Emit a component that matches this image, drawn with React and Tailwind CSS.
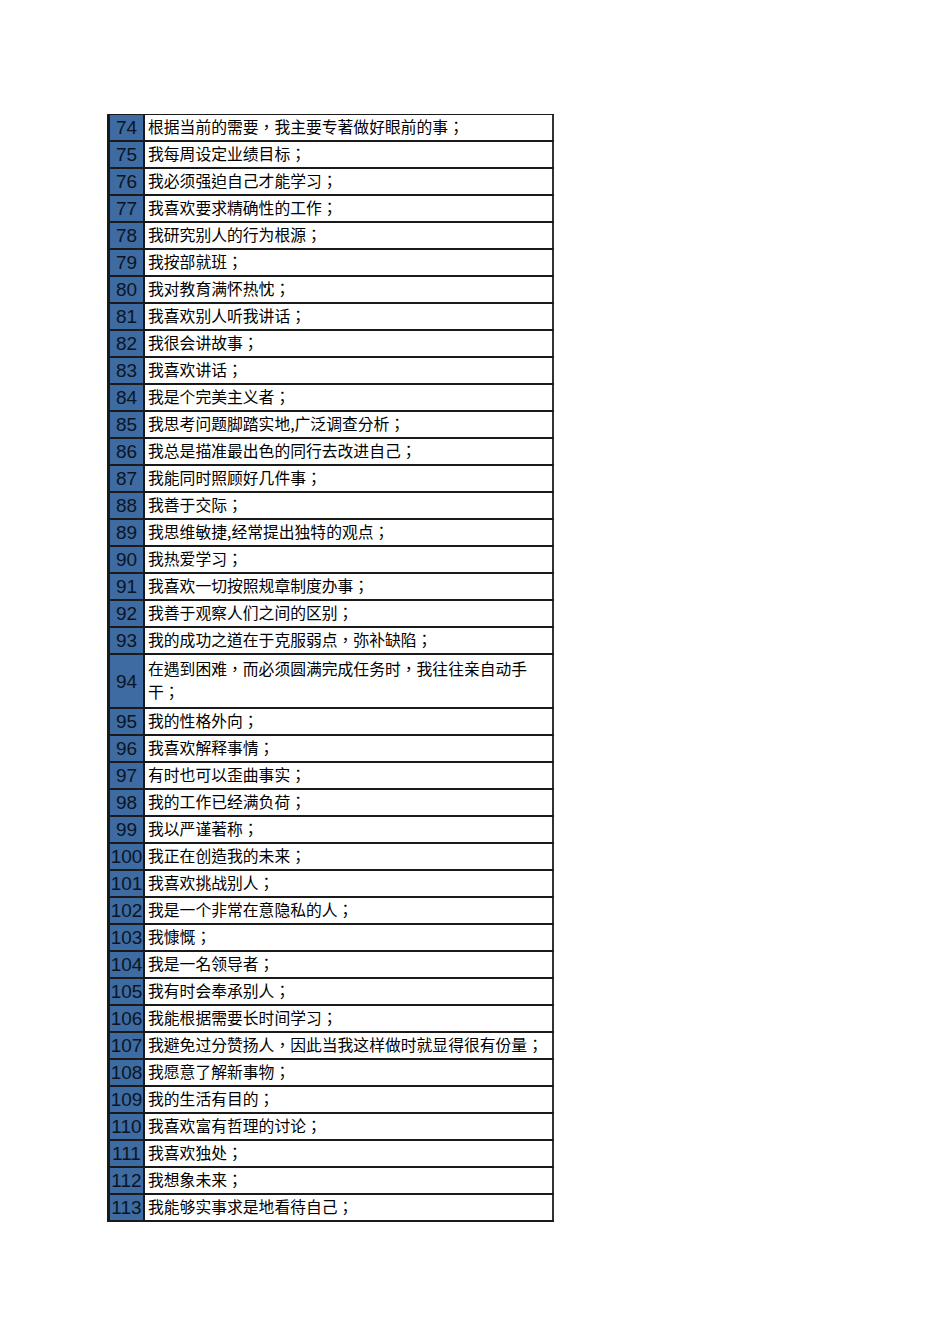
const ROWS = [
  [74, '根据当前的需要，我主要专著做好眼前的事；'],
  [75, '我每周设定业绩目标；'],
  [76, '我必须强迫自己才能学习；'],
  [77, '我喜欢要求精确性的工作；'],
  [78, '我研究别人的行为根源；'],
  [79, '我按部就班；'],
  [80, '我对教育满怀热忱；'],
  [81, '我喜欢别人听我讲话；'],
  [82, '我很会讲故事；'],
  [83, '我喜欢讲话；'],
  [84, '我是个完美主义者；'],
  [85, '我思考问题脚踏实地,广泛调查分析；'],
  [86, '我总是描准最出色的同行去改进自己；'],
  [87, '我能同时照顾好几件事；'],
  [88, '我善于交际；'],
  [89, '我思维敏捷,经常提出独特的观点；'],
  [90, '我热爱学习；'],
  [91, '我喜欢一切按照规章制度办事；'],
  [92, '我善于观察人们之间的区别；'],
  [93, '我的成功之道在于克服弱点，弥补缺陷；'],
  [94, '在遇到困难，而必须圆满完成任务时，我往往亲自动手', '干；'],
  [95, '我的性格外向；'],
  [96, '我喜欢解释事情；'],
  [97, '有时也可以歪曲事实；'],
  [98, '我的工作已经满负荷；'],
  [99, '我以严谨著称；'],
  [100, '我正在创造我的未来；'],
  [101, '我喜欢挑战别人；'],
  [102, '我是一个非常在意隐私的人；'],
  [103, '我慷慨；'],
  [104, '我是一名领导者；'],
  [105, '我有时会奉承别人；'],
  [106, '我能根据需要长时间学习；'],
  [107, '我避免过分赞扬人，因此当我这样做时就显得很有份量；'],
  [108, '我愿意了解新事物；'],
  [109, '我的生活有目的；'],
  [110, '我喜欢富有哲理的讨论；'],
  [111, '我喜欢独处；'],
  [112, '我想象未来；'],
  [113, '我能够实事求是地看待自己；'],
];

export default function App() {
  return (
    <div className="w-[950px] h-[1344px] bg-white pt-[114px] pl-[107px]">
      <div className="w-[447px] border-t border-l-[3px] border-[#1a1a1a]">
        {ROWS.map(([num, line1, line2]) => (
          <div
            key={num}
            className={`flex ${line2 ? 'h-[54px]' : 'h-[27px]'} border-b-2 border-[#1a1a1a]`}
          >
            <div className="w-[35px] shrink-0 bg-[#3d6ba2] border-r-2 border-[#1a1a1a] flex items-center justify-center text-[19px] leading-none text-[#0b1522] font-['Liberation_Sans',sans-serif]">
              {num}
            </div>
            <div className="flex-1 border-r-2 border-[#333] pl-[3px] pb-[2px] flex flex-col justify-center text-[15.8px] leading-[23px] text-black font-['Noto_Sans_CJK_TC','Noto_Sans',sans-serif] whitespace-nowrap">
              <span>{line1}</span>
              {line2 && <span>{line2}</span>}
            </div>
          </div>
        ))}
      </div>
    </div>
  );
}
